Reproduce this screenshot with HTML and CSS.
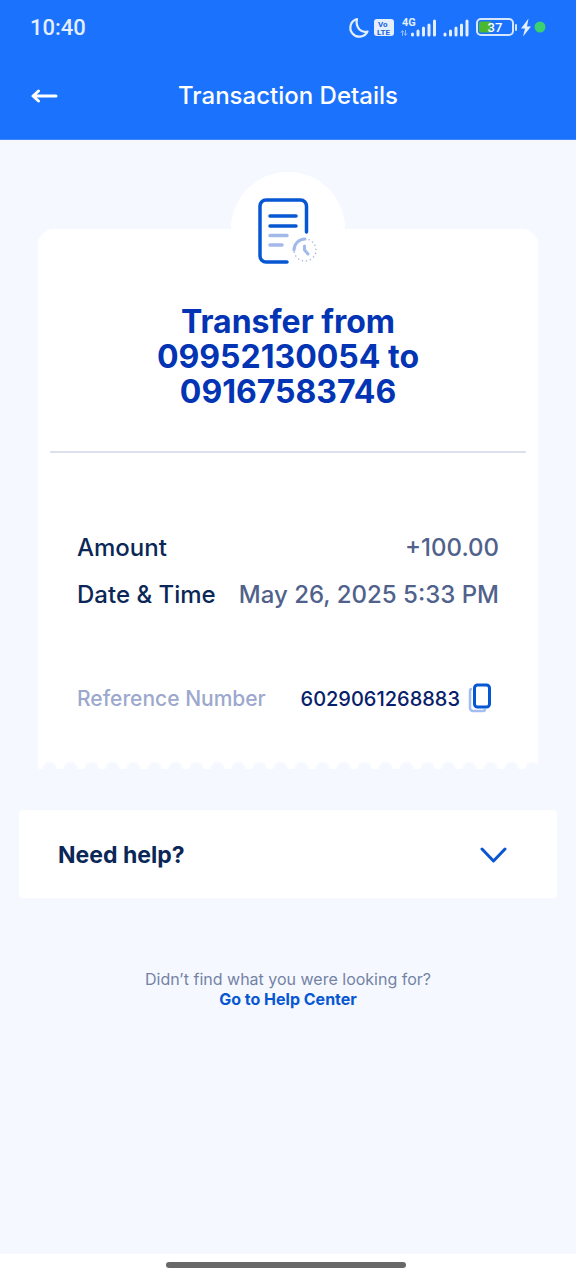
FILE: index.html
```html
<!DOCTYPE html>
<html lang="en">
<head>
<meta charset="utf-8">
<meta name="viewport" content="width=device-width, initial-scale=1">
<title>Transaction Details</title>
<link rel="stylesheet" href="styles.css">
</head>
<body>
<header class="header">
  <div class="status">
    <span class="clock">10:40</span>
    <svg class="status-icons" width="200" height="28" viewBox="0 0 200 28" aria-label="Status icons">
      <path d="M9 4A9 9 0 1 0 19.500 16.500Q15 18 11.500 14.500Q7.500 10 9 4Z" fill="none" stroke="#e3efff" stroke-width="2.200" stroke-linejoin="round"/>
      <rect x="26" y="4" width="20" height="17" rx="3" fill="#e3efff"/>
      <text class="tiny volte" x="30" y="12">Vo</text>
      <text class="tiny volte" x="29" y="20">LTE</text>
      <text class="tiny net" x="54" y="11">4G</text>
      <path d="M54.500 21v-5M53 17.500l1.500-2 1.500 2M57.500 15v5M56 18.500l1.500 2 1.500-2" stroke="#8fbbff" fill="none"/>
      <g stroke="#e3efff" stroke-width="3" stroke-linecap="round">
        <path d="M64.500 20v-1M70 20v-4M75.500 20v-7M81 20v-10M86.500 20V6"/>
        <path d="M97 20v-1M102.500 20v-4M108 20v-7M113.500 20v-10M119 20V6"/>
      </g>
      <rect x="129" y="4" width="36" height="16" rx="4" fill="none" stroke="#d5e6ff" stroke-width="2"/>
      <path d="M133 6.500h10v11h-10a2 2 0 0 1-2-2v-7a2 2 0 0 1 2-2z" fill="#4cb82f"/>
      <path d="M168 10v5" stroke="#d5e6ff" stroke-width="2" stroke-linecap="round"/>
      <text class="tiny charge" x="147" y="17" text-anchor="middle">37</text>
      <path d="M180.500 3.500l-7.500 10h4l-2 8 8-10h-4z" fill="#e3efff"/>
      <circle cx="192" cy="12" r="5.500" fill="#3bd070"/>
    </svg>
  </div>
  <div class="toolbar">
    <button class="back" type="button" aria-label="Back">
      <svg width="28" height="16" viewBox="0 0 28 16"><path d="M25 8H3M7.500 3L2 8l5.500 5" fill="none" stroke="#fff" stroke-width="3" stroke-linecap="round" stroke-linejoin="round"/></svg>
    </button>
    <h1 class="title">Transaction Details</h1>
  </div>
</header>
<main class="content">
  <section class="receipt">
    <div class="badge">
      <svg width="60" height="68" viewBox="0 0 60 68" fill="none" stroke-linecap="round" aria-hidden="true">
        <path d="M48.500 35V9a6 6 0 0 0-6-6H8a6 6 0 0 0-6 6v50a6 6 0 0 0 6 6h21" stroke="#0757d3" stroke-width="3.500"/>
        <path d="M12 19h26M12 29h26" stroke="#0757d3" stroke-width="3.500"/>
        <path d="M12 38.500h17M12 48h12" stroke="#a3b9ea" stroke-width="3.500"/>
        <path d="M36 53a11 11 0 0 1 11-11" stroke="#a3b9ea" stroke-width="3"/>
        <path d="M47 42a11 11 0 1 1-11 11" stroke="#a9b8dc" stroke-width="1.500" stroke-dasharray="0.100 4"/>
        <path d="M46.500 49v4l3.500 4" stroke="#a3b9ea" stroke-width="3"/>
      </svg>
    </div>
    <h2 class="summary">Transfer from<br>09952130054 to<br>09167583746</h2>
    <dl class="rows">
      <div class="row"><dt>Amount</dt><dd>+100.00</dd></div>
      <div class="row"><dt>Date &amp; Time</dt><dd>May 26, 2025 5:33 PM</dd></div>
    </dl>
    <div class="reference">
      <span class="ref-label">Reference Number</span>
      <span class="ref-number">6029061268883</span>
      <button class="copy" type="button" aria-label="Copy reference number">
        <svg width="24" height="30" viewBox="0 0 24 30" fill="none"><path d="M4 6a2 2 0 0 0-2 2v17a3 3 0 0 0 3 3h10a2 2 0 0 0 2-2" stroke="#a3bdf0" stroke-width="2.500"/><rect x="6.500" y="2" width="15" height="22" rx="3" fill="#fff" stroke="#0757d3" stroke-width="3"/></svg>
      </button>
    </div>
  </section>
  <div class="perforation"></div>
  <button class="help" type="button" aria-expanded="false">
    <span>Need help?</span>
    <svg width="28" height="18" viewBox="0 0 28 18"><path d="M3 3l11.500 12L26 3" fill="none" stroke="#0757d3" stroke-width="3" stroke-linecap="round" stroke-linejoin="round"/></svg>
  </button>
  <p class="more">Didn’t find what you were looking for?<br><a class="link" href="#help">Go to Help Center</a></p>
</main>
<footer class="nav"><div class="handle"></div></footer>
</body>
</html>
```
FILE: styles.css
```css
* { box-sizing: border-box; }
body {
  margin: 0;
  min-height: 100vh;
  display: flex;
  flex-direction: column;
  background: #f5f9ff;
  font-family: Inter, "Liberation Sans", sans-serif;
  color: #0a2757;
}
h1, h2, dl, dd, p { margin: 0; }
button { border: 0; padding: 0; background: none; font: inherit; color: inherit; cursor: pointer; }
svg { display: block; }

.header { background: #1b72fc; color: #fff; padding-bottom: 16px; border-bottom: 1px solid #3f87f8; }
.status {
  display: flex;
  justify-content: space-between;
  align-items: center;
  height: 56px;
  padding: 0 28px 0 30px;
}
.status-icons { margin-top: 2px; }
.clock { font: 500 22px/28px Roboto, sans-serif; color: #e3efff; }
.tiny { font-family: Roboto, sans-serif; font-weight: 700; }
.volte { font-size: 8px; fill: #1b62dc; }
.net { font-size: 11px; fill: #e3efff; }
.charge { font-size: 13px; font-weight: 500; fill: #fff; }
.toolbar {
  display: grid;
  grid-template-columns: 28px 1fr 28px;
  align-items: center;
  padding: 24px 31px 11px;
}
.title { font-size: 24px; line-height: 32px; font-weight: 500; text-align: center; }

.content { flex: 1; padding: 89px 19px 40px; }
.receipt {
  display: flow-root;
  margin: 0 19px;
  padding: 0 12px 46px;
  background: #fff;
  border-radius: 16px 16px 0 0;
}
.badge {
  display: flex;
  justify-content: center;
  align-items: center;
  width: 114px;
  height: 114px;
  margin: -57px auto 0;
  padding-top: 3px;
  border-radius: 50%;
  background: #fff;
}
.summary {
  padding: 18px 0 42px;
  border-bottom: 2px solid #dcdfee;
  font-size: 32px;
  line-height: 35px;
  font-weight: 700;
  text-align: center;
  color: #0234b4;
}
.rows { padding: 79px 27px 0; display: grid; gap: 15px; }
.row { display: flex; justify-content: space-between; font-size: 24px; line-height: 32px; font-weight: 500; white-space: nowrap; }
.row dd { color: #50628c; }
.reference { display: flex; align-items: center; padding: 72px 34px 0 27px; line-height: 32px; font-size: 20px; font-weight: 500; white-space: nowrap; }
.ref-label { font-size: 21px; color: #9ca8cd; }
.ref-number { margin-left: auto; color: #08206c; }
.copy { margin: 0 0 2px 8px; }
.perforation {
  height: 8px;
  margin: 0 19px;
  background: radial-gradient(circle at 50% 100%, #f5f9ff 6px, #fff 8px) 1px 0 / 21px 8px repeat-x;
}
.help {
  display: flex;
  justify-content: space-between;
  align-items: center;
  width: 100%;
  height: 88px;
  margin-top: 41px;
  padding: 2px 50px 0 39px;
  background: #fff;
  border-radius: 4px;
  font-size: 23px;
  font-weight: 700;
}
.more { margin-top: 71px; text-align: center; font-size: 16px; line-height: 20px; color: #7482a5; }
.link { color: #0757d3; font-weight: 700; text-decoration: none; }
.nav { display: flex; justify-content: center; height: 26px; padding: 8px 4px 0 0; background: #fff; }
.handle { width: 42%; height: 6px; border-radius: 3px; background: #686868; }
```
